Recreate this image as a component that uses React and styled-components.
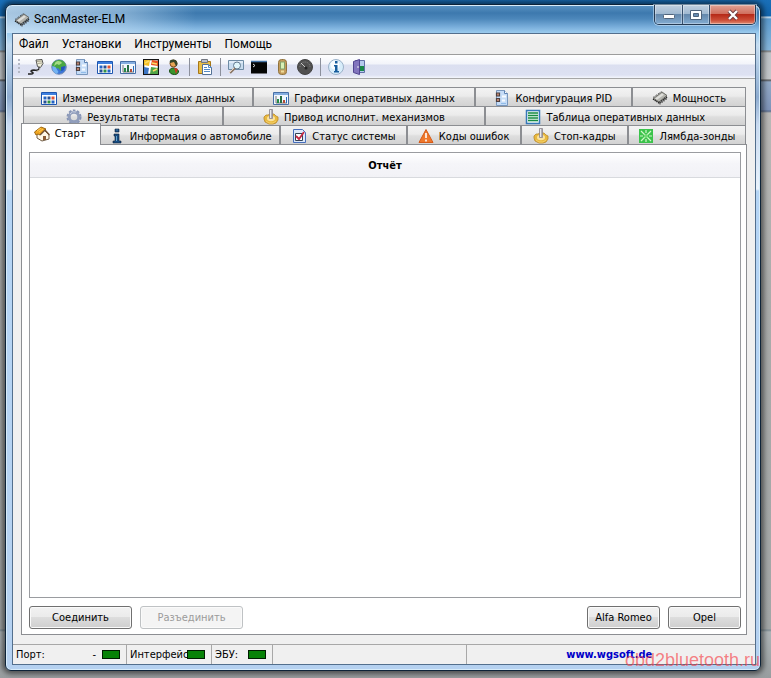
import React from "react";
import styled, { createGlobalStyle, css } from "styled-components";

const UI = `"DejaVu Sans Condensed", "DejaVu Sans", sans-serif`;
const SHELL = `Roboto, "Noto Sans", sans-serif`;

const GlobalStyle = createGlobalStyle`
  *, *::before, *::after { box-sizing: border-box; }
  body { margin: 0; font-family: ${UI}; font-size: 11px; color: #000; }
  button { font: inherit; color: inherit; margin: 0; }
`;

const Desktop = styled.div`
  display: flex;
  min-height: 100vh;
  padding: 4px 10px 7px 5px;
  background: linear-gradient(
    #1a6fb8 0, #1265ad 16px, #d5e6f2 17px, #5b9bce 19px, #85b5da 50px,
    #777 51px, #bcc2c6 53px, #c3c6c9 79px, #555 80px, #92a9c6 82px,
    #7e93b8 110px, #55698c 111px, #b8b8b6 113px, #a9abaa 300px,
    #a2a6a6 629px, #7c8b93 630px, #acb3b6 632px, #989d9f 100%
  );
`;

const Window = styled.main`
  position: relative;
  flex: 1;
  min-width: 0;
  display: flex;
  flex-direction: column;
  padding: 0 4px 5px 6px;
  border: 1px solid #0d2338;
  border-radius: 7px 7px 6px 6px;
  background:
    linear-gradient(90deg, rgba(225, 240, 252, .65), rgba(190, 218, 240, .5) 120px, transparent 190px) 0 0 / 100% 28px no-repeat,
    linear-gradient(#5b94c4 0, #3d79ae 8px, #4d88bb 14px, #79aedb 22px, #9bcbee 28px, #c6ddf1 40px, #8eacd0 92px, #c9daf0 120px, #eaf3fc 184px, #b5d5f5 186px, #b5d1f0 100%);
  box-shadow: inset 0 0 0 1px #d7ebf9, 0 0 5px 3px rgba(0, 0, 0, .5);
`;

const TitleBar = styled.header`
  display: flex;
  align-items: flex-start;
  height: 28px;
  padding-left: 2px;
  font: 12px/28px ${SHELL};
`;

const Title = styled.h1`
  flex: 1;
  margin: 0 0 0 4px;
  font: inherit;
`;

const TitleIcon = styled.span`
  display: flex;
  padding-top: 7px;
`;

const Controls = styled.div`
  display: flex;
  border: 1px solid #253a52;
  border-top: 0;
  border-radius: 0 0 5px 5px;
  overflow: hidden;
  box-shadow: 0 0 0 1px rgba(220, 240, 255, .5);
`;

const Control = styled.button`
  display: grid;
  place-items: center;
  width: ${(p) => (p.$close ? 46 : 27)}px;
  height: 19px;
  padding: 0;
  border: 0;
  border-left: ${(p) => (p.$first ? "0" : "1px solid #36506e")};
  box-shadow: inset 0 0 0 1px rgba(255, 255, 255, .35);
  background: ${(p) =>
    p.$close
      ? "linear-gradient(#e0a294, #cf6d5c 48%, #b62a18 50%, #cc4e38 80%, #df8b72)"
      : "linear-gradient(#c0d0e0, #9fb8d0 48%, #6488ac 50%, #83acd1)"};
`;

const Client = styled.div`
  flex: 1;
  display: flex;
  flex-direction: column;
  border: 1px solid #536f8d;
  background: #f0f0f0;
`;

const MenuBar = styled.nav`
  display: flex;
  height: 21px;
  font: 12px/20px ${SHELL};
  background: linear-gradient(#f6f6f6, #eee 5px);
  border-bottom: 1px solid #9c9c9c;
`;

const MenuItem = styled.button`
  padding: 0 7px 0 6px;
  border: 0;
  background: none;
  white-space: nowrap;
`;

const ToolBar = styled.div`
  display: flex;
  align-items: center;
  height: 24px;
  padding-left: 5px;
  gap: 1px;
  background: linear-gradient(#fff 0, #f2f4fa 9px, #dbdff0 10px, #dde1f2 20px, #f4f6fc);
  border-bottom: 1px solid #a6a6a6;
`;

const Grip = styled.span`
  width: 2px;
  height: 16px;
  margin-right: 4px;
  background: repeating-linear-gradient(#b4b8c4 0 2px, transparent 2px 4px);
`;

const Tool = styled.button`
  display: grid;
  place-items: center;
  width: 22px;
  height: 22px;
  padding: 0;
  border: 0;
  background: none;
`;

const Separator = styled.span`
  width: 1px;
  height: 18px;
  margin: 0 3px;
  background: #8c909c;
`;

const Content = styled.div`
  flex: 1;
  display: flex;
  flex-direction: column;
  padding: 8px 8px 9px;
`;

const Tabs = styled.div`
  display: flex;
  flex-direction: column;
`;

const TabRow = styled.div`
  display: grid;
  grid-template-columns: ${(p) => p.$columns};
  grid-template-rows: 19px;
  align-items: end;
  margin: 0 1px 0 ${(p) => (p.$front ? 0 : 2)}px;
`;

const Tab = styled.button`
  display: flex;
  align-items: center;
  justify-content: center;
  gap: 5px;
  min-width: 0;
  height: 19px;
  padding: 2px 0 0;
  border: 1px solid #8c8e92;
  border-width: 1px 2px 0 0;
  background: linear-gradient(#f3f3f3, #ebebeb 45%, #dedede 55%, #d2d2d2);
  white-space: nowrap;

  &:first-child { border-left-width: 1px; }
  &:last-child { border-right-width: 1px; }

  ${(p) =>
    p.$active &&
    css`
      z-index: 1;
      height: 22px;
      padding-bottom: 4px;
      padding-right: 3px;
      margin-bottom: -1px;
      border-right-width: 1px;
      background: #fff;
    `}
`;

const Panel = styled.section`
  flex: 1;
  display: flex;
  flex-direction: column;
  gap: 8px;
  padding: 7px 5px 5px 7px;
  border: 1px solid #8c8e92;
  background: #fff;
`;

const Report = styled.section`
  flex: 1;
  border: 1px solid #9a9ca0;
`;

const ReportTitle = styled.h2`
  margin: 0;
  font-size: 11px;
  line-height: 26px;
  height: 25px;
  text-align: center;
  background: linear-gradient(#fff, #f5f5f9 45%, #f2f2f6);
  border-bottom: 1px solid #d8dade;
`;

const Actions = styled.div`
  display: flex;
  gap: 8px;
`;

const Spacer = styled.span`
  flex: 1;
`;

const PushButton = styled.button`
  width: ${(p) => (p.$small ? 73 : 103)}px;
  height: 23px;
  padding: 0;
  border: 1px solid #707070;
  border-radius: 3px;
  box-shadow: inset 0 0 0 1px #fafafa;
  background: linear-gradient(#f2f2f2, #ebebeb 48%, #dddddd 50%, #cfcfcf);

  &:disabled {
    border-color: #bfc2c4;
    background: #f4f4f4;
    color: #9b9b9b;
  }
`;

const StatusBar = styled.footer`
  display: grid;
  grid-template-columns: 114px 85px 61px 194fr 289fr;
  height: 20px;
  border-top: 1px solid #a8a8a8;
`;

const StatusCell = styled.div`
  display: flex;
  align-items: center;
  justify-content: ${(p) => (p.$center ? "center" : "flex-start")};
  min-width: 0;
  padding: 0 6px 0 3px;
  border-right: 1px solid #a8a8a8;
  white-space: nowrap;

  &:last-child { border-right: 0; }
`;

const StatusLabel = styled.span`
  flex: 1;
  min-width: 0;
`;

const StatusValue = styled.span`
  margin-right: 6px;
`;

const Led = styled.span`
  width: 18px;
  height: 9px;
  border: 1px solid #001c00;
  background: #078207;
`;

const SiteLink = styled.a`
  color: #0000c8;
  font-weight: bold;
  text-decoration: none;
`;

const Watermark = styled.span`
  position: absolute;
  right: 0;
  bottom: 0;
  font: 18px/20px "Liberation Sans", Arial, sans-serif;
  color: rgba(246, 62, 70, .65);
  pointer-events: none;
`;

const Svg = ({ children }) => (
  <svg width="16" height="16" viewBox="0 0 16 16" aria-hidden="true">{children}</svg>
);

const ChipIcon = () => (
  <Svg>
    <path d="M1.500 8.500 10 2l5 3.500L7 12Z" fill="#b4b4ae" stroke="#55554f" strokeWidth=".8" />
    <path d="m3 8.500 7-5 2 1.200-7 5.100Z" fill="#dededa" />
    <path d="m1 9 6 4 8.500-6.500" fill="none" stroke="#222" strokeWidth="1.400" strokeDasharray="1.300 .7" />
    <path d="m1 7.500 8.500-6" stroke="#333" strokeDasharray="1 1" />
    <path d="M8 12v2.500M10 10.500V13M12 9v2.500M14 7.500V10" stroke="#333" />
  </Svg>
);

const PlugIcon = () => (
  <Svg>
    <path d="m8 1 6-.5 1 4-2.500 4-3-1Z" fill="#eeeeda" stroke="#444" strokeWidth=".9" />
    <path d="m9 2.500 5-.5M9.500 4.500l4.500-.5" stroke="#a8a38d" />
    <path d="M11 8c1 3-2 3.500-5 3-3 0-4 1-2 2s1 2-1 2H0" fill="none" stroke="#222" strokeWidth="1.400" />
    <path d="M12 8.500c0 3-2 4-4 4" fill="none" stroke="#bbb" />
  </Svg>
);

const GlobeIcon = () => (
  <Svg>
    <circle cx="8" cy="8" r="7.300" fill="#3a76d8" stroke="#7b91b5" />
    <path d="M1 7c0-4 4-6 8-6 3 0 6 3 6 6l-3 1-2 4-3-3-3 1Z" fill="#49a743" />
    <path d="M4 4c2-3 6-2 7 0L8 6 6 5 3 7Z" fill="#a4dc83" />
    <path d="m1.500 7 3 1 3 5-2 2C2 13 1 10 1.500 7Z" fill="#72b2f2" />
    <path d="m10 8 4-1c0 3-2 5-4 5Z" fill="#2456b8" />
  </Svg>
);

const ConfigIcon = () => (
  <Svg>
    <path d="M2.500.5h8l3 3v12h-11Z" fill="#c5dcf7" stroke="#7997bd" />
    <path d="M10.500.5v3h3" fill="#fff" stroke="#5d82b3" />
    <path d="M2.500 3h3v3h-3zM2.500 8.500h3v3h-3z" fill="#c98a73" stroke="#4d4140" strokeWidth="1.200" />
    <path d="M8 6.500h4M8 10.500h3" stroke="#f8fbff" strokeWidth="2" />
    <path d="M7 13.500h5" stroke="#91bce9" />
  </Svg>
);

const GridIcon = () => (
  <Svg>
    <path d="M.5 2.500h15v12H.5z" fill="#fff" stroke="#1e56b0" />
    <path d="M1 3h14v2H1z" fill="#3e80df" />
    <path d="M2.500 6.500h3v3h-3zM10.500 10.500h3v3h-3z" fill="#2464c4" />
    <path d="M6.500 6.500h3v3h-3zM2.500 10.500h3v3h-3z" fill="#265094" />
    <path d="M10.500 6.500h3v3h-3z" fill="#df5436" />
    <path d="M6.500 10.500h3v3h-3z" fill="#319246" />
  </Svg>
);

const ChartIcon = () => (
  <Svg>
    <path d="M.5 2.500h15v12H.5z" fill="#f2f7fd" stroke="#486fa6" />
    <path d="M1 3h14v2H1z" fill="#86aee0" />
    <path d="M3 6v7h11" fill="none" stroke="#777" />
    <path d="M4 9h2v4H4z" fill="#258b47" />
    <path d="M7 6h2v7H7z" fill="#286d44" />
    <path d="M10 10h2v3h-2z" fill="#b34c38" />
    <path d="M13 7h1v6h-1z" fill="#276cbc" />
  </Svg>
);

const MosaicIcon = () => (
  <Svg>
    <path d="M.5.5h15v15H.5z" fill="#fff" stroke="#151515" strokeWidth="1.500" />
    <path d="M1 1h6L6 7 1 6Z" fill="#f5bd24" />
    <path d="m9 1 6 1v5L8 6Z" fill="#e75420" />
    <path d="m1 8 5 1-1 6H1Z" fill="#3c75c5" />
    <path d="m8 8 7 1v6H7Z" fill="#4fa347" />
    <path d="m2 4 4-2M9 4l5 1M10 12l4-2" stroke="#f9db68" strokeWidth="1.500" />
  </Svg>
);

const UserIcon = () => (
  <Svg>
    <path d="M3.500 12c0-4 7-4 9 0 0 2-1 3.500-4 3.500s-5-1.500-5-3.500Z" fill="#39952d" stroke="#174b14" />
    <path d="M8 8.500 10 15l2-5Z" fill="#c73822" />
    <circle cx="7.500" cy="4.500" r="3.500" fill="#e6a454" stroke="#7d4a20" />
    <path d="M4 4C2 0 10-1 11 3c1 2 0 4-1 4L8 3Z" fill="#36452a" />
  </Svg>
);

const PasteIcon = () => (
  <Svg>
    <path d="M1.500 2.500h12v12h-12z" fill="#e8bd46" stroke="#a77716" />
    <path d="M4.500.5h6v3h-6z" fill="#bcc1cb" stroke="#72767f" />
    <path d="M5.500 5.500h6l3 3v7h-9z" fill="#fff" stroke="#547296" />
    <path d="M11.500 5.500v3h3M7 8.500h3M7 10.500h6M7 12.500h6" fill="none" stroke="#548bc8" />
  </Svg>
);

const SearchIcon = () => (
  <Svg>
    <path d="M.5 1.500h15v9H.5z" fill="#c8dcef" stroke="#6d8ba5" />
    <path d="M1 3h14" stroke="#f6faff" />
    <circle cx="9" cy="6.500" r="3.500" fill="#dff5fb" stroke="#60798f" />
    <path d="m7 9-5 5" stroke="#8a7768" strokeWidth="2.300" />
    <path d="m6 9-5 5" stroke="#e8d3be" />
  </Svg>
);

const ConsoleIcon = () => (
  <Svg>
    <path d="M0 2.500h16v12H0z" fill="#050505" />
    <path d="M0 2.500h16" stroke="#4675a8" strokeWidth="1.500" />
    <path d="m2 5 2 1.500L2 8" fill="none" stroke="#ddd" />
  </Svg>
);

const DeviceIcon = () => (
  <Svg>
    <rect x="4.500" y=".5" width="8" height="15" rx="3" fill="#c49c5c" stroke="#8f723d" />
    <rect x="6.500" y="3" width="4" height="7" fill="#d8f0b6" stroke="#83a06d" />
    <path d="M7 12.500h3" stroke="#eedc9b" strokeWidth="2" />
  </Svg>
);

const GaugeIcon = () => (
  <Svg>
    <circle cx="8" cy="8" r="7.500" fill="#505050" stroke="#444" />
    <path d="M3 8a5 5 0 0 1 10 0" fill="none" stroke="#868686" strokeDasharray="1 1" />
    <path d="m4 4 5 5" stroke="#c8c8c8" />
    <circle cx="9" cy="9" r="1.500" fill="#242424" />
  </Svg>
);

const InfoIcon = () => (
  <Svg>
    <circle cx="8" cy="8" r="7.500" fill="#d8edfb" stroke="#9bb2c9" />
    <circle cx="7" cy="6" r="4.500" fill="#f8fcff" />
    <path d="M7 2h2.500v2.500H7zM6 6h3.500v6H11v1.500H6V12h1V7.500H6z" fill="#175d9d" />
  </Svg>
);

const ExitIcon = () => (
  <Svg>
    <path d="M4.500 1.500h9v12h-9z" fill="#b4c9ed" stroke="#616fa7" />
    <path d="m2.500 2.500 6-2v15l-6-2Z" fill="#8275be" stroke="#51458f" />
    <path d="M7 7v2" stroke="#eee" />
    <path d="M9 7h4v5H9z" fill="#19884a" />
  </Svg>
);

const GearIcon = () => (
  <Svg>
    <circle cx="8" cy="8" r="6.500" fill="none" stroke="#8694b6" strokeWidth="2" strokeDasharray="2.600 1.500" />
    <circle cx="8" cy="8" r="4.800" fill="none" stroke="#909dbb" strokeWidth="3" />
    <path d="M4 5a5 5 0 0 1 6-2" fill="none" stroke="#c8d0e2" />
  </Svg>
);

const ActuatorIcon = () => (
  <Svg>
    <path d="m1 8 2-2h2l2-1h4l2 2 2 1v3l-2 3-3 1H6l-4-2-1-3Z" fill="#e8b93f" stroke="#b98829" strokeWidth=".8" />
    <ellipse cx="8" cy="9.500" rx="4" ry="2.700" fill="#fae3a0" />
    <path d="m3 12 3 2h4l3-2" fill="none" stroke="#f6d26f" />
    <path d="M6.500.5h3v9h-3z" fill="#b0b0b8" stroke="#8b858e" strokeWidth=".8" />
    <path d="M7.500 1v8" stroke="#e8e8ec" />
  </Svg>
);

const ListIcon = () => (
  <Svg>
    <path d="M1.500 1.500h13v13h-13z" fill="#eef9f5" stroke="#3778b9" strokeWidth="1.500" />
    <path d="M3 4h10M3 6.500h10M3 9h10M3 11.500h10" stroke="#178b42" strokeWidth="1.500" />
  </Svg>
);

const HomeIcon = () => (
  <Svg>
    <path d="m3 7 7-3 5 5v4l-7 2-5-3Z" fill="#fff8e8" stroke="#725d45" />
    <path d="M.5 6 7 1l5 2-6 6-2-1-2 1Z" fill="#f1a51e" stroke="#9b6712" />
    <path d="m6 9 5-5 4.500 5" fill="none" stroke="#725234" strokeWidth="1.500" />
    <path d="M9 10h3v4H9z" fill="#8b5c36" />
    <path d="m3 5 4-3M5 6l4-3" stroke="#ffce57" />
  </Svg>
);

const VehicleInfoIcon = () => (
  <Svg>
    <path d="M6 1h4v3H6zM5 6h5v7h2v2H4v-2h2V8H5z" fill="#174c81" stroke="#10213b" strokeWidth=".6" />
    <path d="M7.500 2h1M7.500 8v5" stroke="#67a7cf" />
  </Svg>
);

const CheckIcon = () => (
  <Svg>
    <path d="M2.500 1.500h9l3 3v10h-12z" fill="#dce8fa" stroke="#456dba" />
    <path d="M4.500 5.500h7v7h-7z" fill="#fff" stroke="#345" />
    <path d="m5 8 3 3 5-7" fill="none" stroke="#c32842" strokeWidth="1.800" />
  </Svg>
);

const WarningIcon = () => (
  <Svg>
    <path d="M8 1.500 15 14.500H1Z" fill="#ee782c" stroke="#d65b17" strokeLinejoin="round" />
    <path d="M8 5v5M8 11.500v2" stroke="#fff" strokeWidth="1.600" />
  </Svg>
);

const LambdaIcon = () => (
  <Svg>
    <path d="M1 1h14v14H1z" fill="#3bc34b" />
    <path d="m3 3 10 10M13 3 3 13M8 2v3M8 11v3M2 8h3M11 8h3" stroke="#d2f6ca" strokeWidth="1.200" />
    <circle cx="8" cy="8" r="2" fill="#72da75" />
  </Svg>
);

const tools = [
  [["Подключение", PlugIcon], ["Интернет", GlobeIcon], ["Конфигурация PID", ConfigIcon], ["Измерения", GridIcon], ["Графики", ChartIcon], ["Панель", MosaicIcon], ["Пользователь", UserIcon]],
  [["Вставить", PasteIcon]],
  [["Поиск", SearchIcon], ["Терминал", ConsoleIcon], ["Устройство", DeviceIcon], ["Приборы", GaugeIcon]],
  [["О программе", InfoIcon], ["Выход", ExitIcon]],
];

const tabRows = [
  {
    columns: "231fr 221fr 157fr 113fr",
    tabs: [["Измерения оперативных данных", GridIcon], ["Графики оперативных данных", ChartIcon], ["Конфигурация PID", ConfigIcon], ["Мощность", ChipIcon]],
  },
  {
    columns: "201fr 261fr 260fr",
    tabs: [["Результаты теста", GearIcon], ["Привод исполнит. механизмов", ActuatorIcon], ["Таблица оперативных данных", ListIcon]],
  },
  {
    front: true,
    columns: "80fr 180fr 126fr 114fr 107fr 117fr",
    tabs: [["Старт", HomeIcon], ["Информация о автомобиле", VehicleInfoIcon], ["Статус системы", CheckIcon], ["Коды ошибок", WarningIcon], ["Стоп-кадры", ActuatorIcon], ["Лямбда-зонды", LambdaIcon]],
  },
];

const menus = ["Файл", "Установки", "Инструменты", "Помощь"];

export default function App() {
  return (
    <>
      <GlobalStyle />
      <Desktop>
        <Window>
          <TitleBar>
            <TitleIcon><ChipIcon /></TitleIcon>
            <Title>ScanMaster-ELM</Title>
            <Controls>
              <Control $first aria-label="Свернуть">
                <svg width="14" height="12" aria-hidden="true"><rect x="1.500" y="5.500" width="11" height="4" rx="1" fill="#fff" stroke="#51647b" /></svg>
              </Control>
              <Control aria-label="Развернуть">
                <svg width="14" height="12" aria-hidden="true"><path d="M1.500 1.500h11v9h-11zM4.500 4.500v3h5v-3z" fill="#fff" fillRule="evenodd" stroke="#51647b" /></svg>
              </Control>
              <Control $close aria-label="Закрыть">
                <svg width="14" height="12" aria-hidden="true">
                  <path d="m3 2 8 8M11 2l-8 8" stroke="#6b3c40" strokeWidth="4" />
                  <path d="m3 2 8 8M11 2l-8 8" stroke="#fff" strokeWidth="2.300" />
                </svg>
              </Control>
            </Controls>
          </TitleBar>
          <Client>
            <MenuBar>
              {menus.map((name) => <MenuItem key={name}>{name}</MenuItem>)}
            </MenuBar>
            <ToolBar role="toolbar">
              <Grip />
              {tools.map((group, index) => (
                <React.Fragment key={index}>
                  {index > 0 && <Separator />}
                  {group.map(([name, Icon]) => <Tool key={name} aria-label={name}><Icon /></Tool>)}
                </React.Fragment>
              ))}
            </ToolBar>
            <Content>
              <Tabs role="tablist">
                {tabRows.map((row) => (
                  <TabRow key={row.columns} $columns={row.columns} $front={row.front}>
                    {row.tabs.map(([name, Icon]) => (
                      <Tab key={name} role="tab" aria-selected={name === "Старт"} $active={name === "Старт"}>
                        <Icon />
                        <span>{name}</span>
                      </Tab>
                    ))}
                  </TabRow>
                ))}
              </Tabs>
              <Panel role="tabpanel" aria-label="Старт">
                <Report>
                  <ReportTitle>Отчёт</ReportTitle>
                </Report>
                <Actions>
                  <PushButton>Соединить</PushButton>
                  <PushButton disabled>Разъединить</PushButton>
                  <Spacer />
                  <PushButton $small>Alfa Romeo</PushButton>
                  <PushButton $small>Opel</PushButton>
                </Actions>
              </Panel>
            </Content>
            <StatusBar>
              <StatusCell>
                <StatusLabel>Порт:</StatusLabel>
                <StatusValue>-</StatusValue>
                <Led />
              </StatusCell>
              <StatusCell><StatusLabel>Интерфейс:</StatusLabel><Led /></StatusCell>
              <StatusCell><StatusLabel>ЭБУ:</StatusLabel><Led /></StatusCell>
              <StatusCell />
              <StatusCell $center><SiteLink href="http://www.wgsoft.de">www.wgsoft.de</SiteLink></StatusCell>
            </StatusBar>
          </Client>
          <Watermark>obd2bluetooth.ru</Watermark>
        </Window>
      </Desktop>
    </>
  );
}
